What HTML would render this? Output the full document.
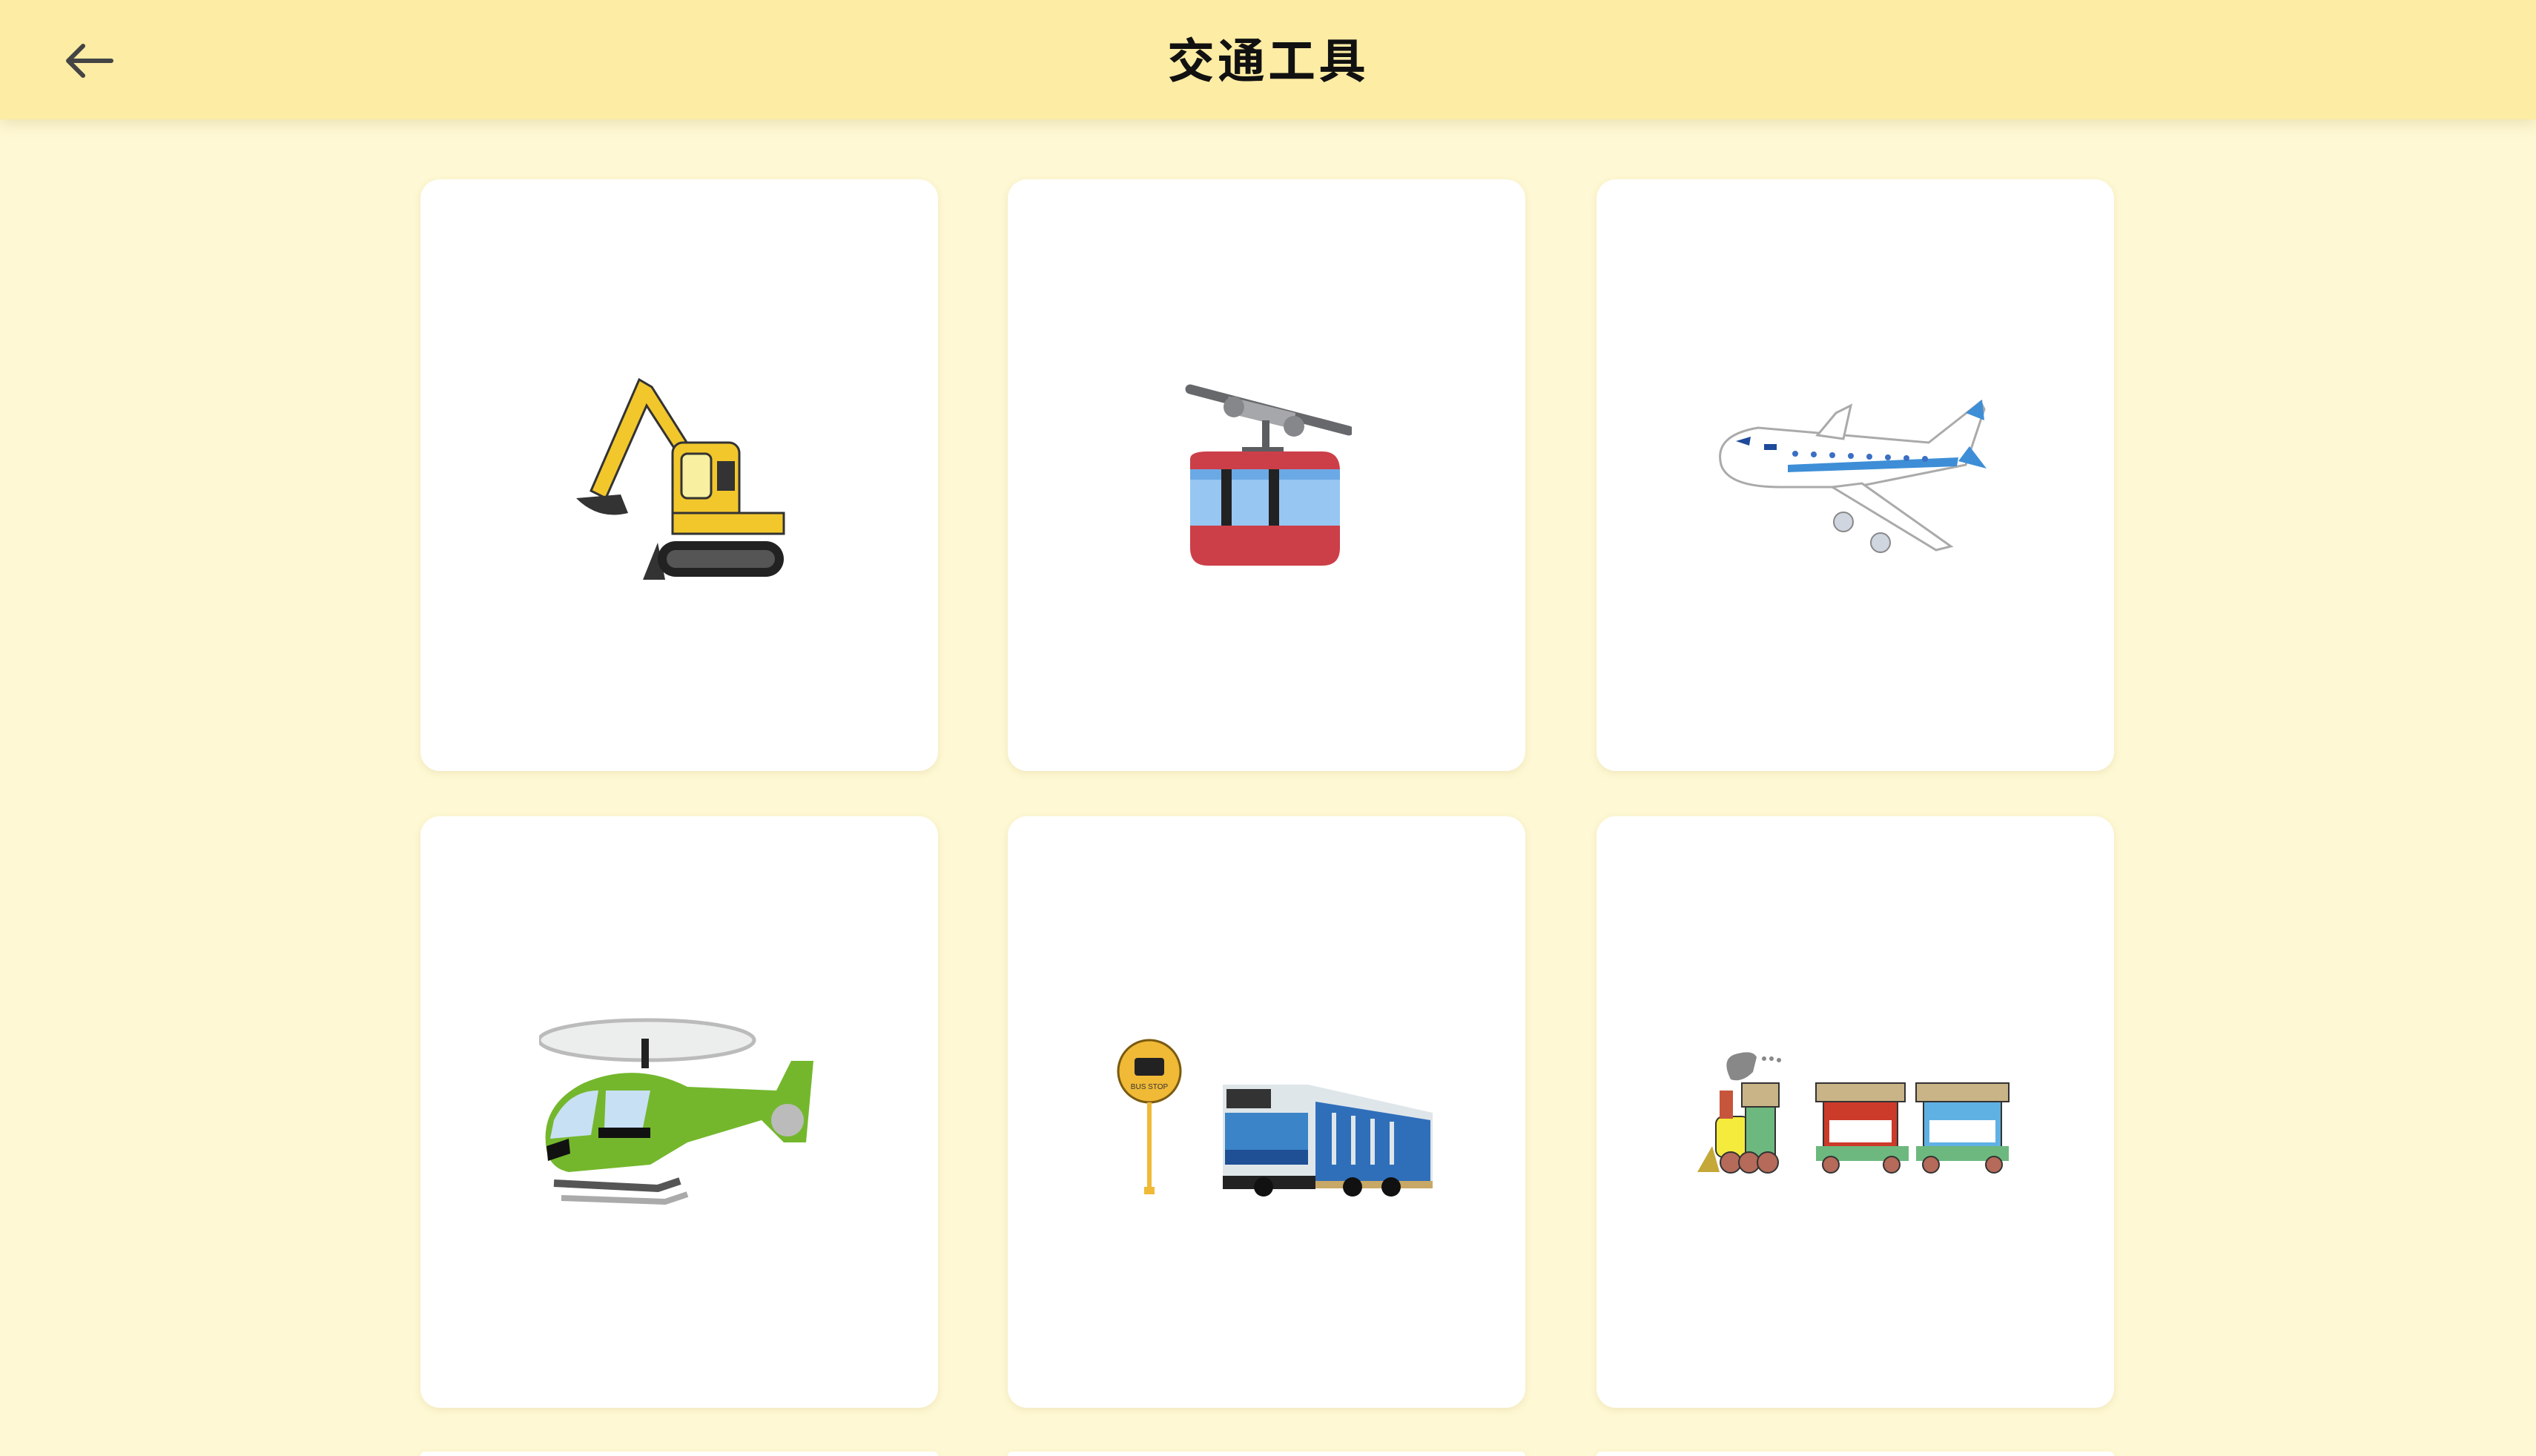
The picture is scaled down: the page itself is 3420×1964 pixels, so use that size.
<!DOCTYPE html>
<html><head><meta charset="utf-8"><style>
html,body{margin:0;padding:0;width:3420px;height:1964px;overflow:hidden;}
body{background:#fef8d4;font-family:"Liberation Sans","Noto Sans CJK SC",sans-serif;}
#wrap{position:relative;width:3420px;height:1964px;overflow:hidden;background:#fef8d4;}
.hdr{position:absolute;left:0;top:0;width:3420px;height:161px;background:#fdeca4;box-shadow:0 6px 18px rgba(150,130,40,0.18);z-index:2;}
.title{position:absolute;left:0;width:3420px;top:40px;text-align:center;font-size:64px;font-weight:bold;color:#111;line-height:86px;letter-spacing:4px;font-family:"Liberation Sans","Noto Sans CJK SC",sans-serif;}
.back{position:absolute;left:84px;top:56px;}
.card{position:absolute;width:698px;height:798px;background:#fff;border-radius:26px;box-shadow:0 3px 10px rgba(160,140,60,0.15);}
.card.p{height:6px;border-radius:26px 26px 0 0;}
.card svg{position:absolute;}
</style></head><body><div id="wrap">
<div class="hdr">
<svg class="back" width="72" height="52" viewBox="0 0 72 52"><path d="M66 26H8M28 6L8 26L28 46" stroke="#444" stroke-width="6" fill="none" stroke-linecap="round" stroke-linejoin="round"/></svg>
<div class="title">交通工具</div>
</div>

<div class="card" style="left:567px;top:242px;">
<svg style="left:200px;top:260px" width="300" height="280" viewBox="0 0 300 280">
<path d="M30 160 L95 10 L112 20 L175 120 L160 130 L105 45 L50 170Z" fill="#f2c72c" stroke="#333" stroke-width="3"/>
<path d="M10 170 Q40 200 80 190 L70 165Z" fill="#333"/>
<rect x="140" y="95" width="90" height="110" rx="14" fill="#f2c72c" stroke="#333" stroke-width="3"/>
<rect x="152" y="110" width="40" height="60" rx="8" fill="#f8f0a0" stroke="#333" stroke-width="3"/>
<rect x="200" y="120" width="24" height="40" fill="#333"/>
<rect x="140" y="190" width="150" height="28" fill="#f2c72c" stroke="#333" stroke-width="3"/>
<path d="M100 280 L120 230 L130 280Z" fill="#333"/>
<rect x="120" y="228" width="170" height="48" rx="24" fill="#222"/>
<rect x="132" y="240" width="146" height="24" rx="12" fill="#555"/>
</svg>
</div>
<div class="card" style="left:1359px;top:242px;">
<svg style="left:238px;top:275px" width="226" height="248" viewBox="0 0 226 248">
<path d="M8 8 L222 64" stroke="#67686b" stroke-width="13" stroke-linecap="round"/>
<path d="M60 18 L150 40 L148 62 L58 40Z" fill="#a6a7aa"/>
<circle cx="67" cy="32" r="14" fill="#86878a"/><circle cx="148" cy="58" r="14" fill="#86878a"/>
<rect x="105" y="50" width="10" height="40" fill="#5c5d60"/>
<rect x="78" y="86" width="56" height="16" fill="#5c5d60"/>
<path d="M8 102 Q8 92 32 92 L186 92 Q210 92 210 118 L210 222 Q210 246 186 246 L32 246 Q8 246 8 222Z" fill="#cc3f48"/>
<rect x="8" y="116" width="202" height="14" fill="#6ba9e6"/>
<rect x="8" y="130" width="202" height="62" fill="#97c6f3"/>
<rect x="50" y="116" width="14" height="76" fill="#222"/><rect x="114" y="116" width="14" height="76" fill="#222"/>
</svg>
</div>
<div class="card" style="left:2153px;top:242px;">
<svg style="left:148px;top:275px" width="410" height="245" viewBox="0 0 410 245">
<path d="M20 110 Q10 70 70 60 L300 80 L370 25 L375 35 L350 110 L200 140 L100 140 Q30 140 20 110Z" fill="#fff" stroke="#aaa" stroke-width="3"/>
<path d="M150 70 L175 40 L195 30 L185 75Z" fill="#fff" stroke="#aaa" stroke-width="3"/>
<path d="M210 135 L330 220 L310 225 L170 140Z" fill="#fff" stroke="#aaa" stroke-width="3"/>
<path d="M350 40 L372 22 L375 50Z M340 105 L378 115 L355 85Z" fill="#3d8ed6"/>
<path d="M110 110 L340 100 L338 112 L110 120Z" fill="#3d8ed6"/>
<path d="M40 78 L60 72 L58 84Z M78 82 L95 82 L95 90 L78 90Z" fill="#1d4a9a"/>
<g fill="#3a6fc4"><circle cx="120" cy="95" r="4"/><circle cx="145" cy="96" r="4"/><circle cx="170" cy="97" r="4"/><circle cx="195" cy="98" r="4"/><circle cx="220" cy="99" r="4"/><circle cx="245" cy="100" r="4"/><circle cx="270" cy="101" r="4"/><circle cx="295" cy="102" r="4"/></g>
<circle cx="185" cy="187" r="13" fill="#cfd6e0" stroke="#888" stroke-width="2"/><circle cx="235" cy="215" r="13" fill="#cfd6e0" stroke="#888" stroke-width="2"/>
</svg>
</div>

<div class="card" style="left:567px;top:1101px;">
<svg style="left:160px;top:270px" width="380" height="260" viewBox="0 0 380 260">
<ellipse cx="145" cy="32" rx="145" ry="27" fill="#eceded" stroke="#bbb" stroke-width="5"/>
<rect x="138" y="30" width="10" height="40" fill="#222"/>
<path d="M10 180 Q0 120 60 90 Q130 60 200 95 L320 100 L340 60 L370 60 L360 170 L330 170 L300 140 L200 170 L150 200 L40 210 Q15 205 10 180Z" fill="#74b72d"/>
<path d="M20 140 Q40 100 80 100 L70 160 L15 165Z" fill="#c8e0f4"/>
<path d="M90 100 L150 100 L140 150 L88 150Z" fill="#c8e0f4"/>
<rect x="80" y="150" width="70" height="14" fill="#111"/>
<path d="M10 175 L40 165 L42 185 L12 195Z" fill="#111"/>
<circle cx="335" cy="140" r="22" fill="#bbb"/>
<path d="M20 225 L160 232 L190 222" stroke="#555" stroke-width="10" fill="none"/>
<path d="M30 245 L170 250 L200 240" stroke="#aaa" stroke-width="8" fill="none"/>
</svg>
</div>
<div class="card" style="left:1359px;top:1101px;">
<svg style="left:145px;top:300px" width="435" height="215" viewBox="0 0 435 215">
<ellipse cx="46" cy="44" rx="42" ry="42" fill="#f0b936" stroke="#7a5a10" stroke-width="3"/>
<rect x="26" y="26" width="40" height="24" rx="4" fill="#222"/>
<text x="46" y="68" font-size="10" font-family="Liberation Sans" text-anchor="middle" fill="#333">BUS STOP</text>
<rect x="43" y="86" width="6" height="120" fill="#f0b936"/>
<rect x="39" y="200" width="14" height="10" fill="#f0b936"/>
<path d="M145 62 L260 62 L428 100 L428 200 L145 200Z" fill="#dfe6ea"/>
<rect x="150" y="68" width="60" height="26" fill="#333"/>
<path d="M148 100 L260 100 L260 170 L148 170Z" fill="#3b84c7"/>
<path d="M148 150 L260 150 L260 170 L148 170Z" fill="#1f4f95"/>
<path d="M270 85 L425 110 L425 192 L270 192Z" fill="#2f6fba"/>
<g fill="#dfe6ea"><rect x="292" y="100" width="6" height="70"/><rect x="318" y="104" width="6" height="66"/><rect x="344" y="108" width="6" height="62"/><rect x="370" y="112" width="6" height="58"/></g>
<rect x="145" y="185" width="125" height="18" fill="#222"/>
<rect x="270" y="192" width="158" height="10" fill="#c8a866"/>
<circle cx="200" cy="200" r="13" fill="#111"/><circle cx="320" cy="200" r="13" fill="#111"/><circle cx="372" cy="200" r="13" fill="#111"/>
</svg>
</div>
<div class="card" style="left:2153px;top:1101px;">
<svg style="left:136px;top:315px" width="432" height="170" viewBox="0 0 432 170">
<path d="M45 40 Q30 10 55 5 Q75 0 80 10 L75 30 Q60 45 45 40Z" fill="#888"/>
<circle cx="90" cy="12" r="3" fill="#888"/><circle cx="100" cy="12" r="3" fill="#888"/><circle cx="110" cy="14" r="3" fill="#888"/>
<rect x="25" y="90" width="45" height="55" rx="10" fill="#f5eb3c" stroke="#333" stroke-width="2"/>
<rect x="65" y="70" width="40" height="75" fill="#6db87e" stroke="#333" stroke-width="2"/>
<rect x="60" y="45" width="50" height="32" fill="#c9b487" stroke="#333" stroke-width="2"/>
<rect x="30" y="55" width="18" height="38" fill="#c7553b"/>
<rect x="160" y="45" width="120" height="25" fill="#c9b487" stroke="#333" stroke-width="2"/>
<rect x="170" y="70" width="100" height="70" fill="#cc3a2a" stroke="#333" stroke-width="2"/>
<rect x="178" y="95" width="84" height="30" fill="#fff"/>
<rect x="295" y="45" width="125" height="25" fill="#c9b487" stroke="#333" stroke-width="2"/>
<rect x="305" y="70" width="105" height="70" fill="#5fb1e4" stroke="#333" stroke-width="2"/>
<rect x="313" y="95" width="89" height="30" fill="#fff"/>
<rect x="160" y="130" width="125" height="20" fill="#6db87e"/><rect x="295" y="130" width="125" height="20" fill="#6db87e"/>
<g fill="#b56a5a" stroke="#333" stroke-width="2"><circle cx="45" cy="152" r="14"/><circle cx="70" cy="152" r="14"/><circle cx="95" cy="152" r="14"/><circle cx="180" cy="155" r="11"/><circle cx="262" cy="155" r="11"/><circle cx="315" cy="155" r="11"/><circle cx="400" cy="155" r="11"/></g>
<path d="M0 165 L20 130 L30 165Z" fill="#c4a838"/>
</svg>
</div>

<div class="card p" style="left:567px;top:1958px;"></div>
<div class="card p" style="left:1359px;top:1958px;"></div>
<div class="card p" style="left:2153px;top:1958px;"></div>
</div></body></html>
